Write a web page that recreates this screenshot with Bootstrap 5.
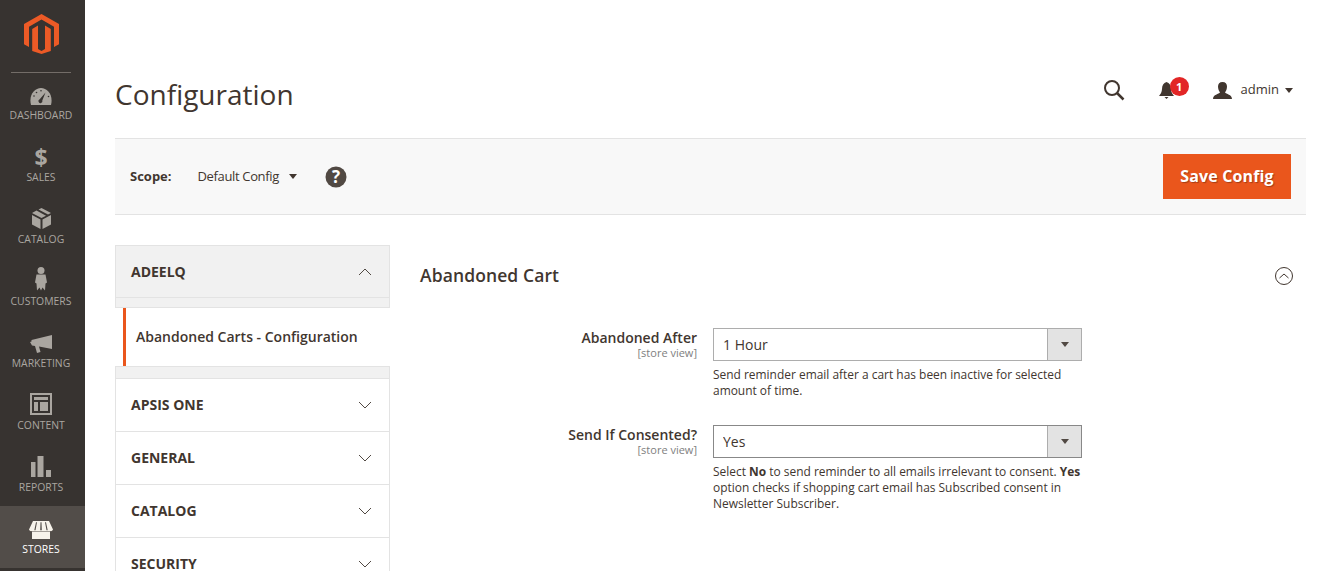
<!DOCTYPE html>
<html lang="en">
<head>
    <meta charset="UTF-8">
    <title>Configuration</title>
    <link href="https://cdn.jsdelivr.net/npm/bootstrap@5.3.0/dist/css/bootstrap.min.css" rel="stylesheet">
    <style>
        html, body { height: 571px; overflow: hidden; }
        body { font-family: "Open Sans", "Liberation Sans", sans-serif; color: #41362f; font-size: 14px; background: #fff; }

        /* left admin menu */
        .side-menu { width: 85px; height: 571px; background: #373330; flex: none; }
        .side-logo { height: 72px; padding: 0 3px 5px 0; }
        .side-rule { height: 1px; background: #736d68; margin: 0 14px 0 11px; }
        .side-list { margin-top: -1px; }
        .side-item { height: 62px; color: #aaa6a0; font-size: 10.4px; line-height: 14px; text-transform: uppercase; padding: 0 3px 12px 0; }
        .side-item svg { fill: #aaa6a0; margin-bottom: 3px; }
        .side-item svg .icon-cut { fill: #373330; }
        .side-item.is-active { background: #524d49; color: #fff; }
        .side-item.is-active svg { fill: #f7f3eb; }
        .side-item.is-active svg .icon-cut { fill: #524d49; }
        .side-dollar { font-size: 23px; font-weight: 700; line-height: 26px; }

        /* page */
        .page-wrap { padding: 0 16px 0 30px; min-width: 0; }
        .page-head { height: 138px; padding-top: 72px; }
        .page-title { font-size: 28px; font-weight: 400; line-height: 44px; color: #41362f; margin: 0; }
        .head-tools { height: 34px; margin: 1px 13px 0 0; }
        .notice-box { width: 54px; margin-left: 34px; height: 17px; }
        .notice-dot { position: absolute; top: -5px; left: 11px; width: 19px; height: 19px; border-radius: 50%; background: #e22626; color: #fff; font-size: 11px; font-weight: 700; line-height: 19px; text-align: center; }
        .admin-name { font-size: 13px; color: #41362f; margin: 0 6px 0 9px; }
        .tri-down { display: inline-block; width: 0; height: 0; border-left: 4.5px solid transparent; border-right: 4.5px solid transparent; border-top: 5px solid #41362f; }

        .scope-bar { height: 77px; background: #f8f8f8; border-top: 1px solid #e3e3e3; border-bottom: 1px solid #e3e3e3; padding: 0 15px; }
        .scope-label { font-size: 13px; font-weight: 700; width: 67.5px; }
        .scope-value { font-size: 13px; letter-spacing: -.35px; margin-right: 10px; }
        .scope-help { margin-left: 28px; }
        .save-btn { background: #ea561c; border: 0; border-radius: 0; color: #fff; font-size: 16px; font-weight: 700; letter-spacing: .15px; width: 128px; height: 45px; padding: 0 0 2px; text-shadow: 1px 1px 1px rgba(0,0,0,.3); }

        .body-row { margin-top: 30px; }
        .tabs-col { width: 275px; flex: none; }
        .tab-head { height: 53px; border: 1px solid #e3e3e3; border-top-width: 0; padding: 0 17px 2px 15px; font-size: 14px; font-weight: 700; color: #41362f; background: #fff; text-transform: uppercase; }
        .tab-head svg { stroke: #514943; margin-top: 2px; }
        .tab-head.is-open { background: #f1f1f1; border-top-width: 1px; padding-bottom: 0; }
        .tab-head.is-open svg { margin-top: 0; }
        .tab-gap { height: 10px; background: #f1f1f1; border: 1px solid #e3e3e3; border-top: 0; }
        .tab-gap.is-low { height: 13px; border-top: 1px solid #e3e3e3; }
        .tab-link { height: 58px; margin-left: 8px; border-left: 3px solid #ea561c; padding: 0 0 2px 10px; font-size: 14px; font-weight: 600; color: #41362f; }

        .form-col { padding-left: 30px; min-width: 0; }
        .section-head { height: 61px; margin-bottom: 22px; }
        .section-title { font-size: 17.5px; font-weight: 600; margin: 0; color: #41362f; letter-spacing: .1px; }
        .section-toggle { margin-right: 13px; }
        .field-label { width: 277px; flex: none; text-align: right; font-size: 14px; font-weight: 600; line-height: 18px; padding-top: 1px; color: #41362f; }
        .scope-note { display: block; font-size: 11px; font-weight: 400; line-height: 12px; color: #808080; }
        .field-body { width: 369px; margin-left: 16px; flex: none; }
        .field-next { margin-top: 25px; }
        .select-box { height: 33px; border: 1px solid #adadad; background: #fff; }
        .select-box.is-dark { border-color: #888; }
        .select-box select { flex: 1; min-width: 0; border: 0; outline: 0; background: transparent; appearance: none; padding: 0 9px; font: inherit; font-size: 14px; color: #41362f; }
        .select-arrow { width: 34px; background: #e3e3e3; border-left: 1px solid #adadad; pointer-events: none; }
        .select-arrow .tri-down { border-left-width: 4px; border-right-width: 4px; border-top-color: #514943; }
        .field-hint { font-size: 11.95px; line-height: 16.3px; color: #41362f; margin: 6px -4px 0 0; }
    </style>
</head>
<body>
<div class="d-flex">
    <nav class="side-menu d-flex flex-column">
        <div class="side-logo d-flex align-items-center justify-content-center">
            <svg width="35" height="40" viewBox="0 0 35 40" aria-hidden="true"><path fill="#ec5a26" d="M17.500 0 35 10v20.200l-5 2.900V12.800L17.500 5.600 5 12.800v20.300l-5-2.900V10z"/><path fill="#ec5a26" d="M8.200 14.900l5.800-3.300v23.500l3.500 2 3.500-2V11.600l5.800 3.300v22L17.500 40 8.200 36.900z"/></svg>
        </div>
        <div class="side-rule"></div>
        <div class="side-list">
            <div class="side-item d-flex flex-column align-items-center justify-content-end">
                <svg width="22" height="17" viewBox="0 0 22 17"><path d="M1 17C-1.500 7 4.500 0 11 0s12.500 7 10 17z"/><path class="icon-cut" d="M15.500 4.500 12.300 12.500a2 2 0 1 1-2.600-1.200z"/><circle class="icon-cut" cx="4" cy="8" r=".8"/><circle class="icon-cut" cx="6.500" cy="4.500" r=".8"/><circle class="icon-cut" cx="11" cy="2.800" r=".8"/><circle class="icon-cut" cx="18.500" cy="8.500" r=".8"/></svg>
                Dashboard
            </div>
            <div class="side-item d-flex flex-column align-items-center justify-content-end">
                <span class="side-dollar">$</span>
                Sales
            </div>
            <div class="side-item d-flex flex-column align-items-center justify-content-end">
                <svg width="19" height="21" viewBox="0 0 19 21"><path d="M9.500 0 19 5l-3 1.600L6.500 1.500zM4.500 2.500 14 7.700l-4.500 2.300L0 5zM0 7l8.500 4.500V21L0 16.500zM19 7v9.500L10.500 21v-9.500z"/></svg>
                Catalog
            </div>
            <div class="side-item d-flex flex-column align-items-center justify-content-end">
                <svg width="12" height="24" viewBox="0 0 12 24"><circle cx="6" cy="3.500" r="3.500"/><path d="M1.500 7.500h9l1.500 8-1.500 1-.5 7-2.500-3-1.500 3-1.500-3-2.500 3-.5-7-1.500-1z"/></svg>
                Customers
            </div>
            <div class="side-item d-flex flex-column align-items-center justify-content-end">
                <svg width="22" height="18" viewBox="0 0 22 18"><path d="M22 0v14L9 11.500l1.500 5.500-3.500 1-2-7-3-.5L0 7l1.500-.5V5L22 0z"/></svg>
                Marketing
            </div>
            <div class="side-item d-flex flex-column align-items-center justify-content-end">
                <svg width="22" height="22" viewBox="0 0 22 22"><path fill-rule="evenodd" d="M0 0h22v22H0zM2 2v18h18V2zM4 4h14v3H4zM4 9h4v9H4zM10 9h8v9h-8z"/></svg>
                Content
            </div>
            <div class="side-item d-flex flex-column align-items-center justify-content-end">
                <svg width="20" height="21" viewBox="0 0 20 21"><path d="M0 6h4.500v15H0zM6.500 0h6v21h-6zM15 14h5v7h-5z"/></svg>
                Reports
            </div>
            <div class="side-item is-active d-flex flex-column align-items-center justify-content-end">
                <svg width="24" height="18" viewBox="0 0 24 18"><path d="M4 0h16l4 8.500c-.5 1.500-2 2-3 1.700V18H3v-7.800C2 10.500.5 10 0 8.500z"/><path class="icon-cut" d="M7 1.200h1L6.500 9.300h-1.200zM11.500 1.200h1l.3 8.100h-1.600zM16 1.200h1l1.700 8.100h-1.200zM0 10h24v.6H0z"/></svg>
                Stores
            </div>
        </div>
    </nav>

    <main class="page-wrap flex-grow-1">
        <header class="page-head d-flex justify-content-between">
            <h1 class="page-title">Configuration</h1>
            <div class="head-tools d-flex align-items-center">
                <svg width="22" height="22" viewBox="0 0 22 22" fill="none" stroke="#41362f" stroke-width="2"><circle cx="9" cy="9" r="7"/><path stroke-width="2.500" d="M14 14l6.500 6.500"/></svg>
                <div class="notice-box position-relative">
                    <svg width="15" height="17" viewBox="0 0 15 17" class="d-block"><path fill="#41362f" d="M7.500 0C10.500 1 12 3.500 12 7c0 3 1.500 5 3 7H0c1.500-2 3-4 3-7 0-3.500 1.500-6 4.500-7zM5.500 15h4L7.500 17z"/></svg>
                    <span class="notice-dot">1</span>
                </div>
                <svg width="19" height="17" viewBox="0 0 19 17"><path fill="#41362f" d="M9.500 0c3 0 4.500 2 4.500 4.500S13 9 12 10.500c1 1.500 7 2 7 6.500H0c0-4.500 6-5 7-6.500C6 9 5 7 5 4.500S6.500 0 9.500 0z"/></svg>
                <span class="admin-name">admin</span>
                <span class="tri-down"></span>
            </div>
        </header>

        <div class="scope-bar d-flex align-items-center justify-content-between">
            <div class="d-flex align-items-center">
                <span class="scope-label">Scope:</span>
                <span class="scope-value">Default Config</span>
                <span class="tri-down"></span>
                <svg width="22" height="22" viewBox="0 0 22 22" class="scope-help"><circle cx="11" cy="11" r="10.500" fill="#514943"/><text x="11" y="17" text-anchor="middle" fill="#fff" font-size="17" font-weight="700" font-family="Open Sans, sans-serif">?</text></svg>
            </div>
            <button type="button" class="btn save-btn">Save Config</button>
        </div>

        <div class="body-row d-flex">
            <aside class="tabs-col">
                <div class="tab-head is-open d-flex align-items-center justify-content-between">
                    ADEELQ
                    <svg width="14" height="8" viewBox="0 0 14 8" fill="none"><path d="M1 7l6-6 6 6"/></svg>
                </div>
                <div class="tab-gap"></div>
                <div class="tab-link d-flex align-items-center">Abandoned Carts - Configuration</div>
                <div class="tab-gap is-low"></div>
                <div class="tab-head d-flex align-items-center justify-content-between">APSIS ONE<svg width="14" height="8" viewBox="0 0 14 8" fill="none"><path d="M1 1l6 6 6-6"/></svg></div>
                <div class="tab-head d-flex align-items-center justify-content-between">General<svg width="14" height="8" viewBox="0 0 14 8" fill="none"><path d="M1 1l6 6 6-6"/></svg></div>
                <div class="tab-head d-flex align-items-center justify-content-between">Catalog<svg width="14" height="8" viewBox="0 0 14 8" fill="none"><path d="M1 1l6 6 6-6"/></svg></div>
                <div class="tab-head d-flex align-items-center justify-content-between">Security<svg width="14" height="8" viewBox="0 0 14 8" fill="none"><path d="M1 1l6 6 6-6"/></svg></div>
            </aside>

            <section class="form-col flex-grow-1">
                <div class="section-head d-flex align-items-center justify-content-between">
                    <h2 class="section-title">Abandoned Cart</h2>
                    <svg width="18" height="18" viewBox="0 0 18 18" fill="none" stroke="#41362f" class="section-toggle"><circle cx="9" cy="9" r="8.500"/><path d="M4.500 11l4.500-4 4.500 4"/></svg>
                </div>
                <div class="d-flex">
                    <div class="field-label">Abandoned After<span class="scope-note">[store view]</span></div>
                    <div class="field-body">
                        <div class="select-box d-flex">
                            <select aria-label="Abandoned After"><option>1 Hour</option></select>
                            <span class="select-arrow d-flex align-items-center justify-content-center"><span class="tri-down"></span></span>
                        </div>
                        <p class="field-hint">Send reminder email after a cart has been inactive for selected amount of time.</p>
                    </div>
                </div>
                <div class="d-flex field-next">
                    <div class="field-label">Send If Consented?<span class="scope-note">[store view]</span></div>
                    <div class="field-body">
                        <div class="select-box is-dark d-flex">
                            <select aria-label="Send If Consented?"><option>Yes</option></select>
                            <span class="select-arrow d-flex align-items-center justify-content-center"><span class="tri-down"></span></span>
                        </div>
                        <p class="field-hint">Select <b>No</b> to send reminder to all emails irrelevant to consent. <b>Yes</b> option checks if shopping cart email has Subscribed consent in Newsletter Subscriber.</p>
                    </div>
                </div>
            </section>
        </div>
    </main>
</div>
<script src="https://cdn.jsdelivr.net/npm/bootstrap@5.3.0/dist/js/bootstrap.bundle.min.js"></script>
</body>
</html>
